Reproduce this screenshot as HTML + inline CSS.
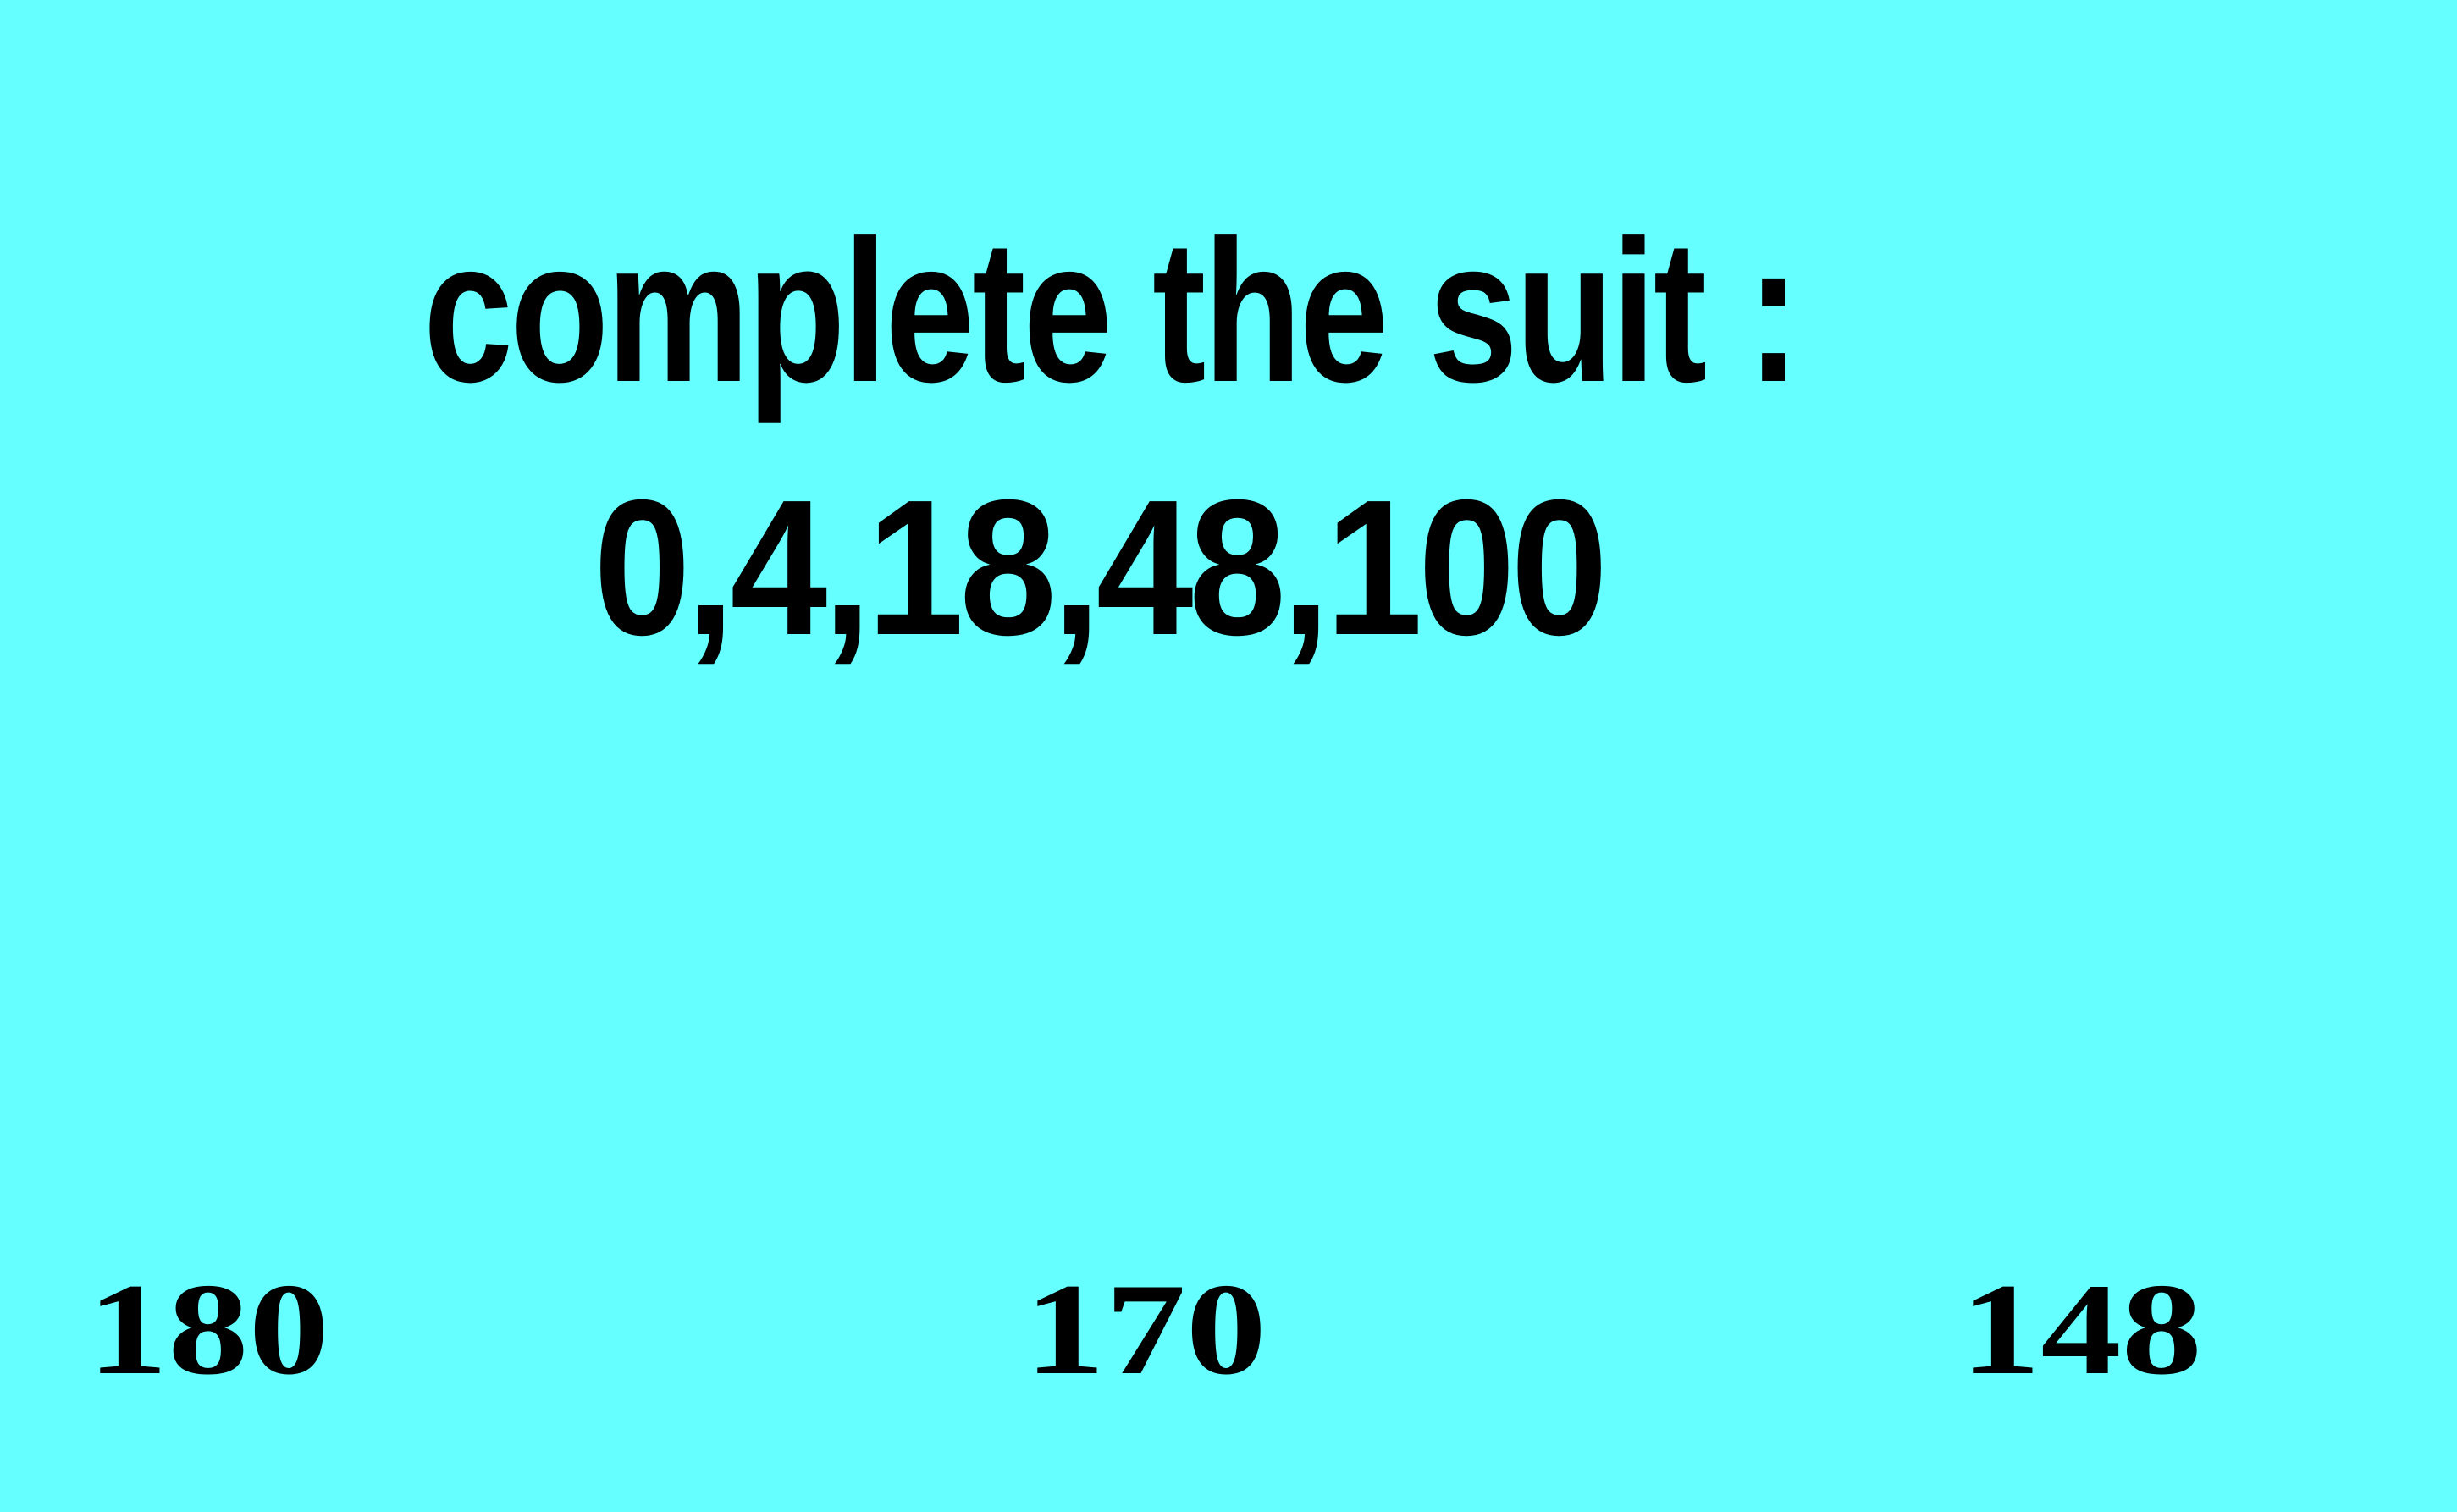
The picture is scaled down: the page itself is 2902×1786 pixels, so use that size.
<!DOCTYPE html>
<html><head><style>
html,body{margin:0;padding:0;}
body{width:2902px;height:1786px;background:#66ffff;position:relative;overflow:hidden;}
.t{position:absolute;white-space:nowrap;line-height:1;color:#000;transform-origin:0 0;}
.s{font-family:"Liberation Sans",sans-serif;font-weight:bold;}
.r{font-family:"Liberation Serif",serif;font-weight:bold;}
</style></head><body>
<div class="t s" style="left:500px;top:247px;font-size:240px;transform:scaleX(0.794);letter-spacing:-4px">complete the suit :</div>
<div class="t s" style="left:701px;top:557px;font-size:228px;transform:scaleX(0.906);letter-spacing:-6px">0,4,18,48,100</div>
<div class="t r" style="left:103px;top:1493px;font-size:155px;transform:scaleX(1.23)">180</div>
<div class="t r" style="left:1210px;top:1493px;font-size:155px;transform:scaleX(1.23)">170</div>
<div class="t r" style="left:2315px;top:1493px;font-size:155px;transform:scaleX(1.23)">148</div>
</body></html>
